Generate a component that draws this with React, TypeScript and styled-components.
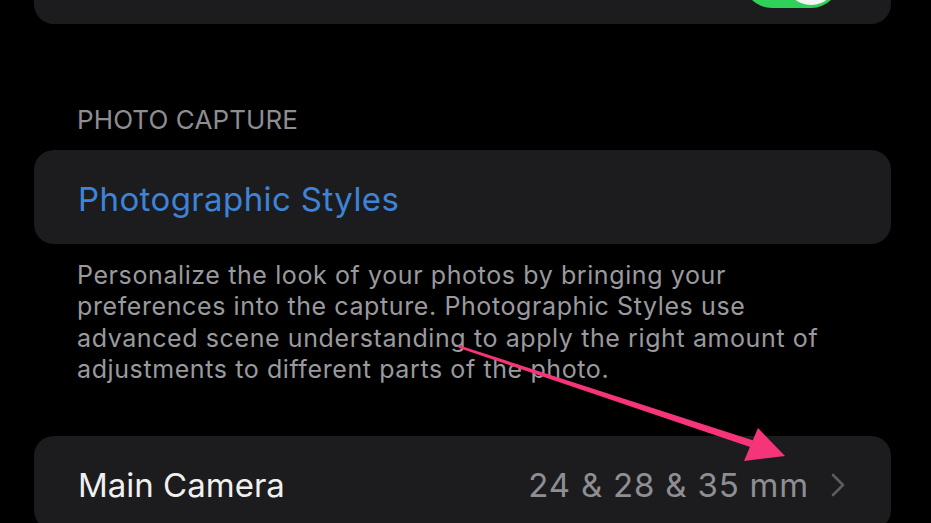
import React from "react";
import styled, { createGlobalStyle } from "styled-components";

const Global = createGlobalStyle`
  html, body { margin: 0; padding: 0; background: #000; }
  body { width: 931px; height: 523px; overflow: hidden; font-family: Inter, "Liberation Sans", sans-serif; -webkit-font-smoothing: antialiased; }
`;

const Page = styled.div`
  position: relative;
  width: 931px;
  height: 523px;
  overflow: hidden;
  background: #000;
  padding: 0 40px 0 34px;
  box-sizing: border-box;
  display: flex;
  flex-direction: column;
`;

const Card = styled.div<{ $top?: string }>`
  flex: none;
  background: #1c1c1e;
  border-radius: 20px;
  margin-top: ${(p) => p.$top || "0"};
`;

const Row = styled.div<{ $h?: number }>`
  height: ${(p) => p.$h || 94}px;
  box-sizing: border-box;
  display: flex;
  align-items: center;
  padding: 4px 46px 0 44px;
  gap: 12px;
`;

const Label = styled.span<{ $color?: string; $ls?: number }>`
  flex: 1;
  font-size: 33px;
  letter-spacing: ${(p) => p.$ls ?? 0}px;
  color: ${(p) => p.$color || "#f0f0f0"};
`;

const Value = styled.span`
  font-size: 33px;
  color: #8e8e93;
  letter-spacing: 0.8px;
`;

const Chevron = styled.svg`
  width: 14px;
  height: 24px;
  margin-left: 10px;
  flex: none;
`;

const Toggle = styled.div`
  width: 97px;
  height: 58px;
  border-radius: 29px;
  background: #30d158;
  position: relative;
  margin-right: 5px;
  flex: none;
`;

const Knob = styled.div`
  position: absolute;
  right: 3px;
  top: 3px;
  width: 52px;
  height: 52px;
  border-radius: 50%;
  background: #f4f4f4;
`;

const Header = styled.div`
  margin: 81px 0 15px 43px;
  font-size: 26px;
  line-height: 30px;
  color: #8d8d92;
  letter-spacing: 0.1px;
`;

const Footer = styled.p`
  margin: 16px 0 0 43px;
  font-size: 25px;
  line-height: 31.3px;
  color: #9a9a9e;
  letter-spacing: 0.6px;
  white-space: nowrap;
`;

const Overlay = styled.svg`
  position: absolute;
  left: 0;
  top: 0;
  pointer-events: none;
`;

export default function App() {
  return (
    <>
      <Global />
      <Page>
        <Card $top="-70px">
          <Row>
            <Label>Preserve Settings</Label>
            <Toggle>
              <Knob />
            </Toggle>
          </Row>
        </Card>
        <Header>PHOTO CAPTURE</Header>
        <Card>
          <Row>
            <Label $color="#3d84d8" $ls={0.4}>
              Photographic Styles
            </Label>
          </Row>
        </Card>
        <Footer>
          Personalize the look of your photos by bringing your
          <br />
          preferences into the capture. Photographic Styles use
          <br />
          advanced scene understanding to apply the right amount of
          <br />
          adjustments to different parts of the photo.
        </Footer>
        <Card $top="51px">
          <Row>
            <Label>Main Camera</Label>
            <Value>24 &amp; 28 &amp; 35 mm</Value>
            <Chevron viewBox="0 0 14 24">
              <path d="M2 2 L12 12 L2 22" fill="none" stroke="#5c5c60" strokeWidth="2.6" strokeLinecap="round" strokeLinejoin="round" />
            </Chevron>
          </Row>
        </Card>
        <Overlay width="931" height="523" viewBox="0 0 931 523">
          <polygon points="458,345 459,348 756,449 758,442" fill="#f5347a" />
          <polygon points="785,456 758,428 744,461" fill="#f5347a" />
        </Overlay>
      </Page>
    </>
  );
}
